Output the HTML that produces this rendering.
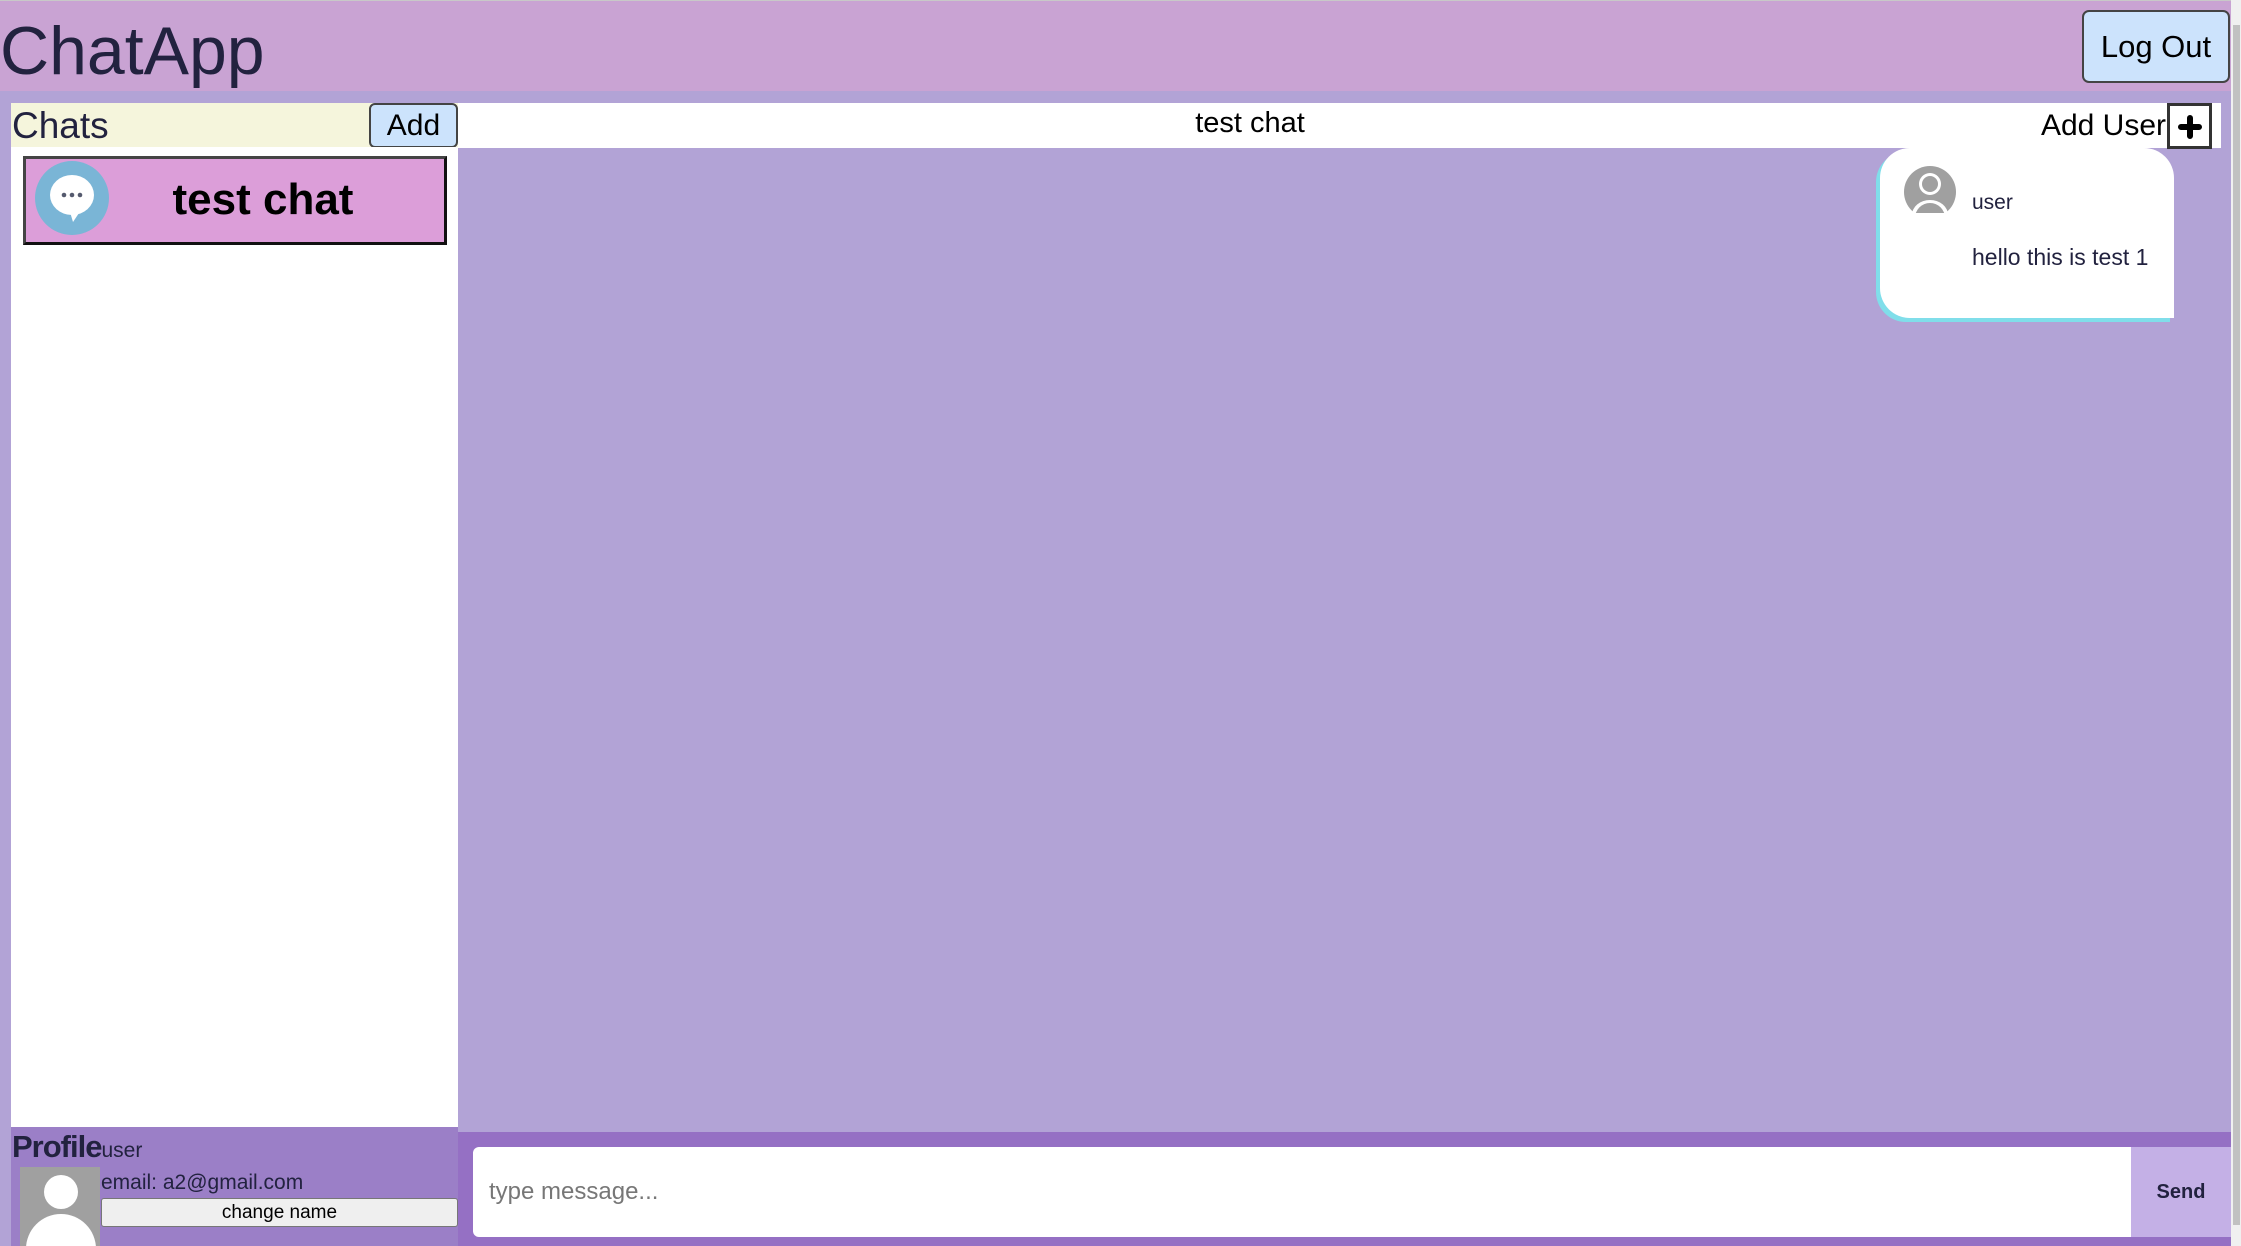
<!DOCTYPE html>
<html><head><meta charset="utf-8"><style>
*{margin:0;padding:0;box-sizing:border-box}
body{width:2241px;height:1246px;overflow:hidden;background:#b2a3d6;position:relative;font-family:"Liberation Sans",sans-serif;color:#22223f}
.a{position:absolute}
</style></head><body>
<div class="a" style="left:0;top:0;width:2231px;height:1px;background:#c8c8c8"></div>
<div class="a" style="left:0;top:1px;width:2231px;height:90px;background:#c9a3d3"></div>
<div class="a" style="left:0;top:9px;font-size:68px;line-height:84px;color:#22223f">ChatApp</div>
<div class="a" style="left:2082px;top:10px;width:148px;height:73px;background:#cce3fc;border:2px solid #444;border-radius:7px;font-size:31px;color:#000;text-align:center;line-height:69px">Log Out</div>

<div class="a" style="left:11px;top:103px;width:447px;height:44px;background:#f5f5dc"></div>
<div class="a" style="left:12px;top:103px;font-size:37px;line-height:46px;color:#22223f">Chats</div>
<div class="a" style="left:369px;top:103px;width:89px;height:45px;background:#cce3fc;border:2px solid #444;border-radius:6px;font-size:30px;color:#000;text-align:center;line-height:41px">Add</div>
<div class="a" style="left:11px;top:147px;width:447px;height:980px;background:#fff"></div>
<div class="a" style="left:23px;top:156px;width:424px;height:89px;background:#dc9ed9;border:3px solid #111;border-top-color:#444;border-left-color:#444"></div>
<svg class="a" style="left:35px;top:160px" width="76" height="76" viewBox="0 0 76 76">
<ellipse cx="37" cy="38" rx="37" ry="37" fill="#7ab5d6"/>
<ellipse cx="37" cy="35" rx="22" ry="20" fill="#fff"/>
<path d="M 35 52 L 38 62 L 46 50 Z" fill="#fff"/>
<circle cx="29" cy="35" r="2.3" fill="#555a6e"/><circle cx="37" cy="35" r="2.3" fill="#555a6e"/><circle cx="45" cy="35" r="2.3" fill="#555a6e"/>
</svg>
<div class="a" style="left:113px;top:172px;width:300px;text-align:center;font-size:44px;font-weight:bold;color:#000;line-height:56px">test chat</div>

<div class="a" style="left:11px;top:1127px;width:447px;height:119px;background:#9b7fc7"></div>
<div class="a" style="left:12px;top:1128px;font-size:31px;line-height:38px;color:#22223f;font-weight:bold;letter-spacing:-1px">Profile<span style="font-size:21px;font-weight:normal;letter-spacing:0">user</span></div>
<div class="a" style="left:20px;top:1167px;width:80px;height:79px;background:#a0a0a0;overflow:hidden">
<div class="a" style="left:24px;top:8px;width:34px;height:34px;border-radius:50%;background:#fff"></div>
<div class="a" style="left:6px;top:47px;width:70px;height:70px;border-radius:50%;background:#fff"></div>
</div>
<div class="a" style="left:101px;top:1168px;font-size:21px;line-height:30px;color:#22223f">email: a2@gmail.com</div>
<div class="a" style="left:101px;top:1198px;width:357px;height:29px;background:#efefef;border:1px solid #777;border-radius:3px;font-size:19px;color:#000;text-align:center;line-height:27px">change name</div>

<div class="a" style="left:458px;top:103px;width:1763px;height:45px;background:#fff"></div>
<div class="a" style="left:1150px;top:104px;width:200px;text-align:center;font-size:29px;line-height:38px;color:#000">test chat</div>
<div class="a" style="left:1900px;top:105px;width:266px;text-align:right;font-size:30px;line-height:42px;color:#000">Add User</div>
<div class="a" style="left:2167px;top:103px;width:45px;height:46px;border:3px solid #333;background:#fff"></div>
<svg class="a" style="left:2177px;top:114px" width="26" height="26"><path d="M13 4V22M4 13H22" stroke="#000" stroke-width="6" stroke-linecap="round"/></svg>

<div class="a" style="left:1880px;top:148px;width:294px;height:170px;background:#fff;border-radius:30px 30px 0 30px;box-shadow:-4px 4px 0 #80deea"></div>
<div class="a" style="left:1904px;top:166px;width:52px;height:47px;overflow:hidden">
<div class="a" style="left:0;top:0;width:52px;height:52px;border-radius:50%;background:#a0a0a0"></div>
<div class="a" style="left:15px;top:7px;width:22px;height:22px;border-radius:50%;background:#fff"></div>
<div class="a" style="left:18px;top:10px;width:16px;height:16px;border-radius:50%;background:#a0a0a0"></div>
<div class="a" style="left:8px;top:34px;width:36px;height:30px;border-radius:50%;background:#fff"></div>
<div class="a" style="left:11px;top:37px;width:30px;height:30px;border-radius:50%;background:#a0a0a0"></div>
</div>
<div class="a" style="left:1972px;top:190px;font-size:21px;line-height:26px;color:#22223f">user</div>
<div class="a" style="left:1972px;top:243px;font-size:23px;line-height:28px;color:#22223f">hello this is test 1</div>

<div class="a" style="left:458px;top:1132px;width:1773px;height:114px;background:#9570c4"></div>
<div class="a" style="left:473px;top:1147px;width:1658px;height:90px;background:#fff;border-radius:6px 0 0 6px"></div>
<div class="a" style="left:489px;top:1177px;font-size:24px;line-height:30px;color:#777">type message...</div>
<div class="a" style="left:2131px;top:1147px;width:100px;height:90px;background:#c4b0e6;text-align:center;line-height:90px;font-size:20px;font-weight:bold;color:#22223f">Send</div>

<div class="a" style="left:2231px;top:0;width:10px;height:1246px;background:#f0f0f0"></div>
<div class="a" style="left:2233px;top:25px;width:7px;height:1200px;background:#c1c1c1"></div>
</body></html>
